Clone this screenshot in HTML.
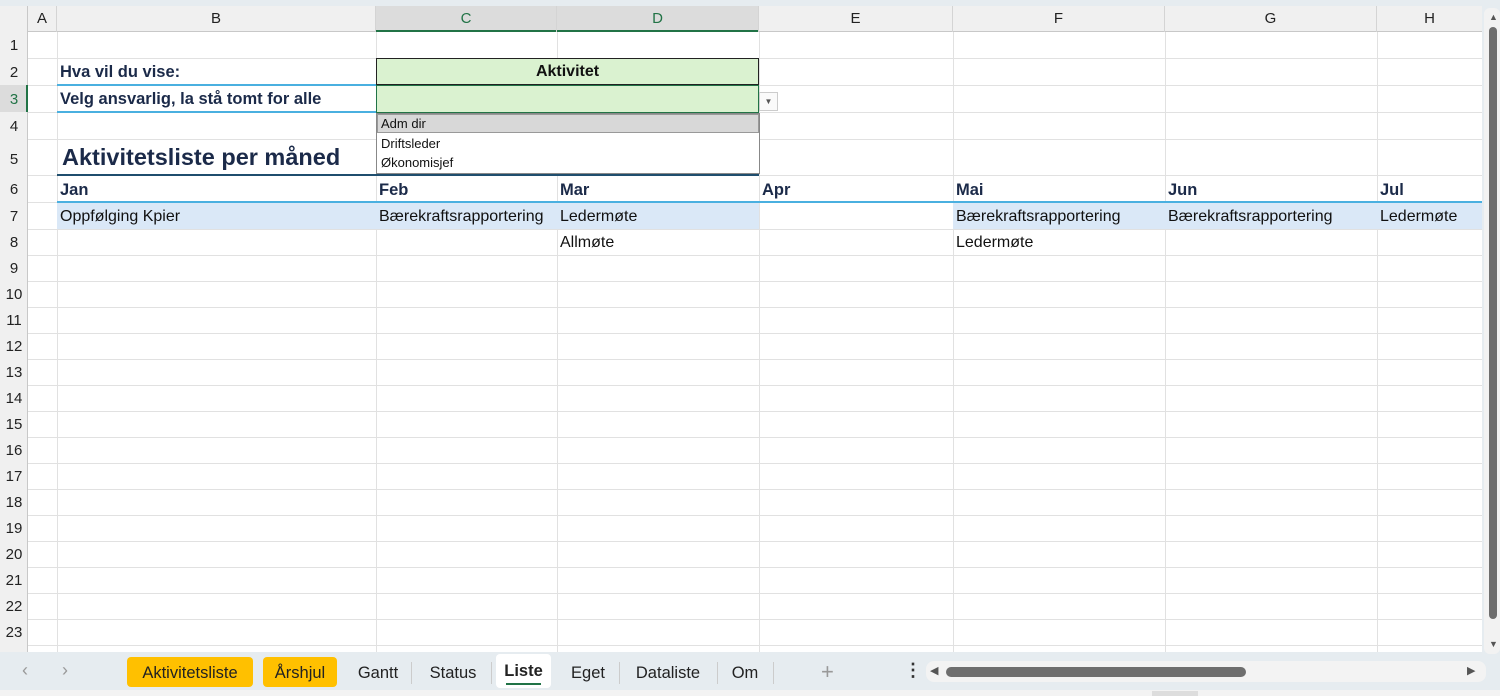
<!DOCTYPE html>
<html><head><meta charset="utf-8"><style>
*{margin:0;padding:0;box-sizing:border-box}
body{width:1500px;height:696px;overflow:hidden;background:#e6ecf0;font-family:"Liberation Sans",sans-serif;position:relative}
.a{position:absolute}
.vl{position:absolute;width:1px;background:#e1e1e1}
.hl{position:absolute;height:1px;background:#e1e1e1}
.rh{position:absolute;left:0;width:28px;text-align:center;font-size:15px;color:#222}
.ch{position:absolute;top:6px;height:26px;line-height:26px;text-align:center;font-size:15px;color:#222;border-right:1px solid #d4d4d4}
.t{position:absolute;font-size:16px;color:#111;white-space:nowrap}
.b{font-weight:bold;color:#1b2a49;font-size:16.5px}
.tab{position:absolute;top:657px;height:30px;line-height:32px;font-size:16.5px;color:#222;text-align:center}
</style></head><body>
<div class="a" style="left:0;top:0;width:1500px;height:6px;background:#e6ecf0"></div>
<div class="a" style="left:0;top:6px;width:1482px;height:646px;background:#fff"></div>
<div class="a" style="left:0;top:6px;width:1482px;height:26px;background:#f0f0f0;border-bottom:1px solid #c8c8c8"></div>
<div class="a" style="left:0;top:6px;width:28px;height:646px;background:#f0f0f0;border-right:1px solid #c8c8c8"></div>
<div class="a" style="left:376px;top:6px;width:383px;height:26px;background:#dcdcdc;border-bottom:2px solid #217346"></div>
<div class="a" style="left:0;top:85px;width:28px;height:27px;background:#dcdcdc;border-right:2px solid #217346"></div>
<div class="ch" style="left:28px;width:29px">A</div>
<div class="ch" style="left:57px;width:319px">B</div>
<div class="ch" style="left:376px;width:181px;color:#217346">C</div>
<div class="ch" style="left:557px;width:202px;color:#217346">D</div>
<div class="ch" style="left:759px;width:194px">E</div>
<div class="ch" style="left:953px;width:212px">F</div>
<div class="ch" style="left:1165px;width:212px">G</div>
<div class="ch" style="left:1377px;width:105px;border:none">H</div>
<div class="vl" style="left:57px;top:32px;height:620px"></div>
<div class="vl" style="left:376px;top:32px;height:620px"></div>
<div class="vl" style="left:557px;top:32px;height:620px"></div>
<div class="vl" style="left:759px;top:32px;height:620px"></div>
<div class="vl" style="left:953px;top:32px;height:620px"></div>
<div class="vl" style="left:1165px;top:32px;height:620px"></div>
<div class="vl" style="left:1377px;top:32px;height:620px"></div>
<div class="hl" style="left:28px;top:58px;width:1454px"></div>
<div class="hl" style="left:28px;top:85px;width:1454px"></div>
<div class="hl" style="left:28px;top:112px;width:1454px"></div>
<div class="hl" style="left:28px;top:139px;width:1454px"></div>
<div class="hl" style="left:28px;top:175px;width:1454px"></div>
<div class="hl" style="left:28px;top:202px;width:1454px"></div>
<div class="hl" style="left:28px;top:229px;width:1454px"></div>
<div class="hl" style="left:28px;top:255px;width:1454px"></div>
<div class="hl" style="left:28px;top:281px;width:1454px"></div>
<div class="hl" style="left:28px;top:307px;width:1454px"></div>
<div class="hl" style="left:28px;top:333px;width:1454px"></div>
<div class="hl" style="left:28px;top:359px;width:1454px"></div>
<div class="hl" style="left:28px;top:385px;width:1454px"></div>
<div class="hl" style="left:28px;top:411px;width:1454px"></div>
<div class="hl" style="left:28px;top:437px;width:1454px"></div>
<div class="hl" style="left:28px;top:463px;width:1454px"></div>
<div class="hl" style="left:28px;top:489px;width:1454px"></div>
<div class="hl" style="left:28px;top:515px;width:1454px"></div>
<div class="hl" style="left:28px;top:541px;width:1454px"></div>
<div class="hl" style="left:28px;top:567px;width:1454px"></div>
<div class="hl" style="left:28px;top:593px;width:1454px"></div>
<div class="hl" style="left:28px;top:619px;width:1454px"></div>
<div class="hl" style="left:28px;top:645px;width:1454px"></div>
<div class="rh" style="top:37px">1</div><div class="rh" style="top:64px">2</div>
<div class="rh" style="top:91px;color:#217346">3</div><div class="rh" style="top:118px">4</div>
<div class="rh" style="top:151px">5</div><div class="rh" style="top:181px">6</div>
<div class="rh" style="top:208px">7</div><div class="rh" style="top:234px">8</div>
<div class="rh" style="top:260px">9</div><div class="rh" style="top:286px">10</div>
<div class="rh" style="top:312px">11</div><div class="rh" style="top:338px">12</div>
<div class="rh" style="top:364px">13</div><div class="rh" style="top:390px">14</div>
<div class="rh" style="top:416px">15</div><div class="rh" style="top:442px">16</div>
<div class="rh" style="top:468px">17</div><div class="rh" style="top:494px">18</div>
<div class="rh" style="top:520px">19</div><div class="rh" style="top:546px">20</div>
<div class="rh" style="top:572px">21</div><div class="rh" style="top:598px">22</div>
<div class="rh" style="top:624px">23</div>
<div class="t b" style="left:60px;top:63px">Hva vil du vise:</div>
<div class="a" style="left:57px;top:84px;width:319px;height:2px;background:#4ab0e0"></div>
<div class="t b" style="left:60px;top:90px">Velg ansvarlig, la stå tomt for alle</div>
<div class="a" style="left:57px;top:111px;width:319px;height:2px;background:#4ab0e0"></div>
<div class="a" style="left:376px;top:58px;width:383px;height:27px;background:#daf2d0;border:1.5px solid #222;text-align:center;line-height:26px;font-weight:bold;font-size:16px;color:#111">Aktivitet</div>
<div class="a" style="left:376px;top:85px;width:383px;height:28px;background:#daf2d0;border:1.5px solid #217346"></div>
<div class="a" style="left:759px;top:92px;width:19px;height:19px;background:#fafafa;border:1px solid #ccc;font-size:8px;text-align:center;line-height:17px;color:#555">▼</div>
<div class="a" style="left:376px;top:113px;width:384px;height:61px;background:#fff;border:1px solid #888"></div>
<div class="a" style="left:377px;top:114px;width:382px;height:19px;background:#d8d8d8;border:1px solid #999"></div>
<div class="t" style="left:381px;top:116px;font-size:13px">Adm dir</div>
<div class="t" style="left:381px;top:136px;font-size:13px">Driftsleder</div>
<div class="t" style="left:381px;top:155px;font-size:13px">Økonomisjef</div>
<div class="t b" style="left:62px;top:144px;font-size:23.5px">Aktivitetsliste per måned</div>
<div class="a" style="left:57px;top:174px;width:319px;height:2px;background:#1f4e6e"></div>
<div class="a" style="left:376px;top:174px;width:383px;height:2px;background:#1f4e6e"></div>
<div class="t b" style="left:60px;top:181px">Jan</div>
<div class="t b" style="left:379px;top:181px">Feb</div>
<div class="t b" style="left:560px;top:181px">Mar</div>
<div class="t b" style="left:762px;top:181px">Apr</div>
<div class="t b" style="left:956px;top:181px">Mai</div>
<div class="t b" style="left:1168px;top:181px">Jun</div>
<div class="t b" style="left:1380px;top:181px">Jul</div>
<div class="a" style="left:57px;top:201px;width:1425px;height:2px;background:#4ab0e0"></div>
<div class="a" style="left:57px;top:203px;width:702px;height:26px;background:#dae8f7"></div>
<div class="a" style="left:953px;top:203px;width:529px;height:26px;background:#dae8f7"></div>
<div class="t" style="left:60px;top:208px">Oppfølging Kpier</div>
<div class="t" style="left:379px;top:208px">Bærekraftsrapportering</div>
<div class="t" style="left:560px;top:208px">Ledermøte</div>
<div class="t" style="left:956px;top:208px">Bærekraftsrapportering</div>
<div class="t" style="left:1168px;top:208px">Bærekraftsrapportering</div>
<div class="t" style="left:1380px;top:208px">Ledermøte</div>
<div class="t" style="left:560px;top:234px">Allmøte</div>
<div class="t" style="left:956px;top:234px">Ledermøte</div>
<div class="a" style="left:1484px;top:8px;width:16px;height:646px;background:#f2f2f2;border-radius:6px"></div>
<div class="a" style="left:1489px;top:12px;font-size:9px;color:#555">▲</div>
<div class="a" style="left:1489px;top:27px;width:8px;height:592px;background:#6e6e6e;border-radius:4px"></div>
<div class="a" style="left:1489px;top:639px;font-size:9px;color:#555">▼</div>
<div class="a" style="left:0;top:690px;width:1500px;height:6px;background:#f3f3f3"></div>
<div class="a" style="left:1152px;top:691px;width:46px;height:5px;background:#ddd"></div>
<div class="a" style="left:22px;top:660px;font-size:18px;color:#999">‹</div>
<div class="a" style="left:62px;top:660px;font-size:18px;color:#999">›</div>
<div class="tab" style="left:127px;width:126px;background:#ffc000;border-radius:4px">Aktivitetsliste</div>
<div class="tab" style="left:263px;width:74px;background:#ffc000;border-radius:4px">Årshjul</div>
<div class="tab" style="left:345px;width:66px">Gantt</div>
<div class="tab" style="left:416px;width:74px">Status</div>
<div class="a" style="left:496px;top:654px;width:55px;height:34px;background:#fff;border-radius:4px"></div>
<div class="tab" style="left:496px;width:55px;top:655px;font-weight:bold">Liste</div>
<div class="a" style="left:506px;top:683px;width:35px;height:2px;background:#217346"></div>
<div class="tab" style="left:560px;width:56px">Eget</div>
<div class="tab" style="left:622px;width:92px">Dataliste</div>
<div class="tab" style="left:720px;width:50px">Om</div>
<div class="a" style="left:411px;top:662px;width:1px;height:22px;background:#ccc"></div>
<div class="a" style="left:491px;top:662px;width:1px;height:22px;background:#ccc"></div>
<div class="a" style="left:619px;top:662px;width:1px;height:22px;background:#ccc"></div>
<div class="a" style="left:717px;top:662px;width:1px;height:22px;background:#ccc"></div>
<div class="a" style="left:773px;top:662px;width:1px;height:22px;background:#ccc"></div>
<div class="a" style="left:821px;top:659px;font-size:22px;color:#999">+</div>
<div class="a" style="left:904px;top:660px;font-size:18px;font-weight:bold;color:#333">⋮</div>
<div class="a" style="left:926px;top:661px;width:560px;height:21px;background:#f3f3f3;border-radius:8px"></div>
<div class="a" style="left:930px;top:664px;font-size:11px;color:#555">◀</div>
<div class="a" style="left:946px;top:667px;width:300px;height:10px;background:#6e6e6e;border-radius:5px"></div>
<div class="a" style="left:1467px;top:664px;font-size:11px;color:#555">▶</div>
</body></html>
